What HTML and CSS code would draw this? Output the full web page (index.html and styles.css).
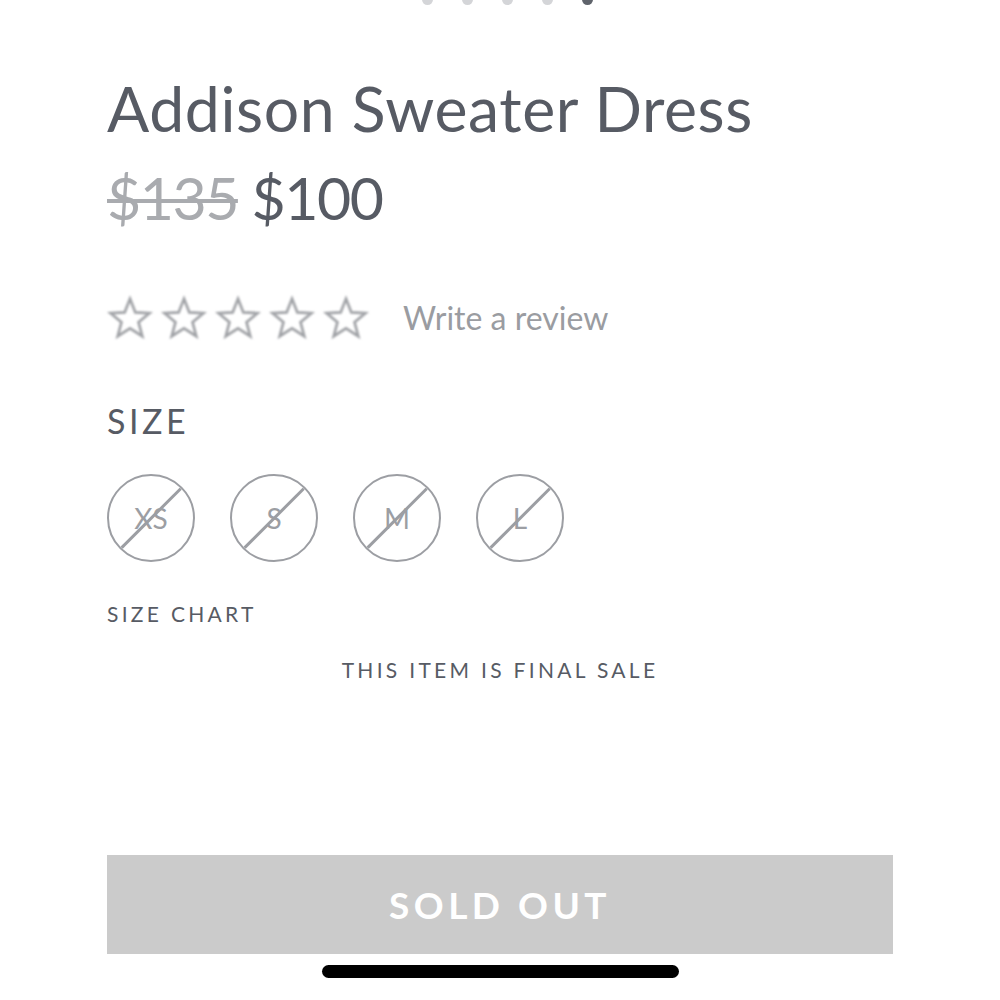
FILE: index.html
```html
<!DOCTYPE html>
<html lang="en">
<head>
  <meta charset="UTF-8" />
  <meta name="viewport" content="width=device-width, initial-scale=1.0"/>
  <title>Addison Sweater Dress</title>
  <link rel="stylesheet" href="styles.css">
</head>
<body>
  <div class="dots">
    <span class="dot"></span>
    <span class="dot"></span>
    <span class="dot"></span>
    <span class="dot"></span>
    <span class="dot active"></span>
  </div>

  <div class="product">
    <h1 class="title">Addison Sweater Dress</h1>
    <div class="price">
      <span class="price-old">$135</span>
      <span class="price-new">$100</span>
    </div>

    <div class="rating">
      <div class="stars">
        <svg class="star" viewBox="0 0 48 48"><path d="M24 4 L29.6 18.2 L44.5 18.9 L32.9 28.3 L36.8 43 L24 34.7 L11.2 43 L15.1 28.3 L3.5 18.9 L18.4 18.2 Z"/></svg>
        <svg class="star" viewBox="0 0 48 48"><path d="M24 4 L29.6 18.2 L44.5 18.9 L32.9 28.3 L36.8 43 L24 34.7 L11.2 43 L15.1 28.3 L3.5 18.9 L18.4 18.2 Z"/></svg>
        <svg class="star" viewBox="0 0 48 48"><path d="M24 4 L29.6 18.2 L44.5 18.9 L32.9 28.3 L36.8 43 L24 34.7 L11.2 43 L15.1 28.3 L3.5 18.9 L18.4 18.2 Z"/></svg>
        <svg class="star" viewBox="0 0 48 48"><path d="M24 4 L29.6 18.2 L44.5 18.9 L32.9 28.3 L36.8 43 L24 34.7 L11.2 43 L15.1 28.3 L3.5 18.9 L18.4 18.2 Z"/></svg>
        <svg class="star" viewBox="0 0 48 48"><path d="M24 4 L29.6 18.2 L44.5 18.9 L32.9 28.3 L36.8 43 L24 34.7 L11.2 43 L15.1 28.3 L3.5 18.9 L18.4 18.2 Z"/></svg>
      </div>
      <a class="review-link" href="#">Write a review</a>
    </div>

    <div class="size-label">SIZE</div>
    <div class="sizes">
      <button class="size unavailable">XS</button>
      <button class="size unavailable">S</button>
      <button class="size unavailable">M</button>
      <button class="size unavailable">L</button>
    </div>

    <a class="size-chart" href="#">SIZE CHART</a>
    <div class="final-sale">THIS ITEM IS FINAL SALE</div>

    <button class="sold-out" disabled>SOLD OUT</button>
  </div>

  <div class="home-bar"></div>
</body>
</html>
```

FILE: styles.css
```css
body {
  margin: 0;
  background: #fff;
  font-family: 'Lato', 'Noto Sans', sans-serif;
  color: #575b64;
  height: 1000px;
  overflow: hidden;
  position: relative;
}

.dots {
  display: flex;
  justify-content: center;
  gap: 29px;
  margin-top: -6px;
  padding-left: 14px;
}

.dot {
  width: 11px;
  height: 11px;
  border-radius: 50%;
  background: #d4d5d8;
}

.dot.active { background: #5f636b; }

.product {
  padding: 0 107px;
}

.title {
  font-weight: 400;
  font-size: 62.5px;
  letter-spacing: 0.6px;
  margin: 72px 0 0;
  line-height: 1;
}

.price {
  font-size: 59px;
  letter-spacing: -1.5px;
  line-height: 1;
  margin-top: 28px;
}

.price-old {
  color: #a9abaf;
  text-decoration: line-through;
  text-decoration-thickness: 4px;
}

.price-new { color: #575b64; }

.rating {
  display: flex;
  align-items: center;
  margin-top: 68px;
}

.stars {
  display: flex;
  gap: 8px;
  filter: blur(0.8px);
}

.star {
  width: 46px;
  height: 46px;
  fill: none;
  stroke: #a0a2a6;
  stroke-width: 2.8;
}

.review-link {
  color: #9a9ca1;
  font-size: 32px;
  text-decoration: none;
  margin-left: 34px;
}

.size-label {
  font-size: 34px;
  letter-spacing: 3.5px;
  margin-top: 59px;
}

.sizes {
  display: flex;
  gap: 35px;
  margin-top: 33px;
}

.size {
  position: relative;
  width: 88px;
  height: 88px;
  border-radius: 50%;
  border: 2.5px solid #9c9ea3;
  background: #fff;
  color: #9c9ea3;
  font-family: inherit;
  font-size: 28px;
  padding: 0;
  overflow: hidden;
}

/* diagonal strike across unavailable sizes */
.size.unavailable::after {
  content: '';
  position: absolute;
  left: 50%;
  top: 50%;
  width: 100%;
  height: 2.5px;
  background: #9c9ea3;
  transform: translate(-50%, -50%) rotate(-45deg);
}

.size-chart {
  display: block;
  color: #575b64;
  text-decoration: none;
  font-size: 21px;
  letter-spacing: 3.3px;
  margin-top: 39px;
}

.final-sale {
  text-align: center;
  font-size: 21px;
  letter-spacing: 3.3px;
  margin-top: 31px;
}

.sold-out {
  display: block;
  width: 100%;
  height: 99px;
  margin-top: 173px;
  border: none;
  background: #cbcbcb;
  color: #fff;
  font-family: inherit;
  font-weight: 700;
  font-size: 37px;
  letter-spacing: 4.5px;
}

.home-bar {
  position: absolute;
  left: 322px;
  top: 965px;
  width: 357px;
  height: 13px;
  border-radius: 7px;
  background: #000;
}
```
